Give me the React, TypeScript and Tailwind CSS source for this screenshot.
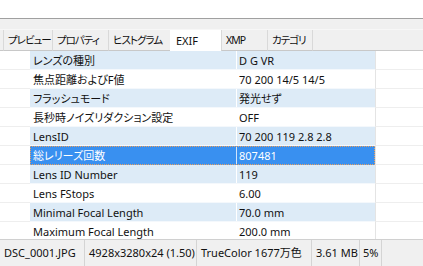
import React from "react";

const rows: [string, string][] = [
  ["レンズの種別", "D G VR"],
  ["焦点距離およびF値", "70 200 14/5 14/5"],
  ["フラッシュモード", "発光せず"],
  ["長秒時ノイズリダクション設定", "OFF"],
  ["LensID", "70 200 119 2.8 2.8"],
  ["総レリーズ回数", "807481"],
  ["Lens ID Number", "119"],
  ["Lens FStops", "6.00"],
  ["Minimal Focal Length", "70.0 mm"],
  ["Maximum Focal Length", "200.0 mm"],
];

const tabs: { label: string; w: string; active?: boolean }[] = [
  { label: "プレビュー", w: "w-[49px]" },
  { label: "プロパティ", w: "w-[56px]" },
  { label: "ヒストグラム", w: "w-[62px]" },
  { label: "EXIF", w: "w-[51px]", active: true },
  { label: "XMP", w: "w-[46px]" },
  { label: "カテゴリ", w: "w-[45px]" },
];

export default function App() {
  return (
    <div
      className="w-[423px] h-[266px] overflow-hidden bg-white text-[11px] text-[#111] flex flex-col [font-feature-settings:'palt']"
      style={{ fontFamily: '"Noto Sans", "Noto Sans CJK JP", sans-serif' }}
    >
      <div className="h-[18px] bg-white shrink-0" />
      <div className="h-[12px] shrink-0 bg-[#f0f0f0] border-t border-[#a0a0a0] border-b border-b-[#f7f7f7]" />
      <div className="h-[21px] shrink-0 flex bg-[#f0f0f0]">
        <div className="w-[3px] border-b border-[#c8c8c8]" />
        {tabs.map((t) => (
          <div
            key={t.label}
            className={
              t.active
                ? `${t.w} h-full bg-white pl-[6px] flex items-center leading-none whitespace-nowrap overflow-hidden`
                : `${t.w} h-full border-l border-[#d9d9d9] border-b border-b-[#c8c8c8] pl-[4px] flex items-center leading-none whitespace-nowrap overflow-hidden text-[10.5px] tracking-[-1px]`
            }
          >
            {t.label}
          </div>
        ))}
        <div className="flex-1 border-l border-[#d9d9d9] border-b border-b-[#c8c8c8]" />
      </div>
      <div className="h-[188px] shrink-0 overflow-hidden flex flex-col">
        {rows.map(([name, value], i) => {
          const selected = i === 5;
          const blue = i % 2 === 0;
          const bg = selected ? "bg-[#3990f0]" : blue ? "bg-[#ddebf7]" : "bg-white";
          return (
            <div key={i} className="h-[19px] shrink-0 flex">
              <div className="w-[30px] shrink-0 border-b border-[#eeeeee] bg-white" />
              <div
                className={`w-[345px] shrink-0 flex ${bg} ${
                  selected ? "outline outline-1 outline-dotted outline-offset-[-1px] outline-[#e8a060] text-white" : "border-b border-[#f4f8fc]"
                }`}
              >
                <div className="w-[206px] shrink-0 pl-[3px] flex items-center leading-none whitespace-nowrap">
                  {name}
                </div>
                <div
                  className={`flex-1 pl-[2px] flex items-center leading-none whitespace-nowrap border-l ${
                    selected ? "border-[#d0e4fb]" : "border-white"
                  }`}
                >
                  {value}
                </div>
              </div>
              <div className="flex-1 border-l border-[#e4e4e4] border-b border-b-[#eeeeee] bg-white" />
            </div>
          );
        })}
      </div>
      <div className="flex-1 bg-[#f0f0f0] border-t border-[#d0d0d0] flex items-center">
        <div className="w-[85px] h-full pl-[4px] flex items-center border-r border-[#d4d4d4] whitespace-nowrap">DSC_0001.JPG</div>
        <div className="w-[112px] h-full pl-[4px] flex items-center border-r border-[#d4d4d4] whitespace-nowrap">4928x3280x24 (1.50)</div>
        <div className="w-[115px] h-full pl-[4px] flex items-center border-r border-[#d4d4d4] whitespace-nowrap">TrueColor 1677万色</div>
        <div className="w-[48px] h-full pl-[4px] flex items-center border-r border-[#d4d4d4] whitespace-nowrap">3.61 MB</div>
        <div className="w-[22px] h-full pl-[3px] flex items-center border-r border-[#d4d4d4] whitespace-nowrap">5%</div>
      </div>
    </div>
  );
}
